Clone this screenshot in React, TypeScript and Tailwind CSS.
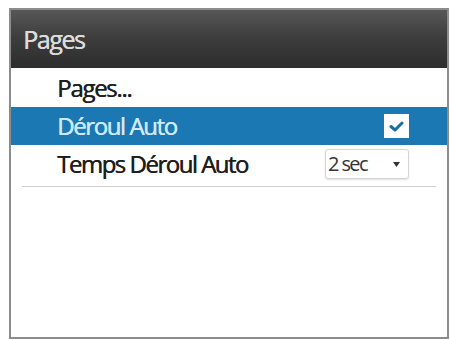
import React from "react";

const font = { fontFamily: '"Open Sans", "Liberation Sans", sans-serif' };

export default function App() {
  return (
    <div className="w-[451px] h-[340px] bg-white pl-[9px] pt-[8px]" style={font}>
      <div className="w-[440px] h-[331px] border-2 border-[#8c8c8c] flex flex-col">
        {/* Title bar */}
        <div className="h-[58px] flex items-center pl-[12px] bg-gradient-to-b from-[#575757] via-[#3c3c3c] to-[#2d2d2d]">
          <span className="text-[25px] tracking-[-1.4px] text-[#dcdcdc] leading-none [text-shadow:0.4px_0_0_#dcdcdc]">
            Pages
          </span>
        </div>

        {/* Menu rows */}
        <div className="h-[39px] flex items-center pl-[46px]">
          <span className="text-[24px] tracking-[-1.3px] text-[#1e1e1e] leading-none [text-shadow:0.5px_0_0_#1e1e1e]">
            Pages...
          </span>
        </div>

        <div className="h-[38px] flex items-center justify-between pl-[46px] pr-[38px] bg-[#1b78b3]">
          <span className="text-[24px] tracking-[-1.4px] text-[#cfe9f9] leading-none [text-shadow:0.4px_0_0_#cfe9f9]">
            Déroul Auto
          </span>
          <div className="w-[25px] h-[24px] bg-white flex items-center justify-center">
            <svg width="15" height="11" viewBox="0 0 15 11" fill="none">
              <path
                d="M2 5.5 L6 9 L13 2"
                stroke="#1a6ea6"
                strokeWidth="3"
                strokeLinecap="round"
                strokeLinejoin="round"
              />
            </svg>
          </div>
        </div>

        <div className="h-[38px] flex items-center justify-between pl-[46px] pr-[38px]">
          <span className="text-[24px] tracking-[-1.5px] text-[#1e1e1e] leading-none [text-shadow:0.5px_0_0_#1e1e1e]">
            Temps Déroul Auto
          </span>
          <div className="w-[84px] h-[30px] border border-[#d4d4d4] rounded-[3px] flex items-center justify-between pl-[2px] pr-[8px] shadow-[0_1px_2px_rgba(0,0,0,0.12)]">
            <span className="text-[20px] tracking-[-1.6px] text-[#333] leading-none">
              2 sec
            </span>
            <svg width="7" height="5" viewBox="0 0 7 5">
              <path d="M0 0 H7 L3.5 5 Z" fill="#333" />
            </svg>
          </div>
        </div>

        <div className="mt-[3px] mx-[11px] h-px bg-[#d0d0d0]" />
      </div>
    </div>
  );
}
